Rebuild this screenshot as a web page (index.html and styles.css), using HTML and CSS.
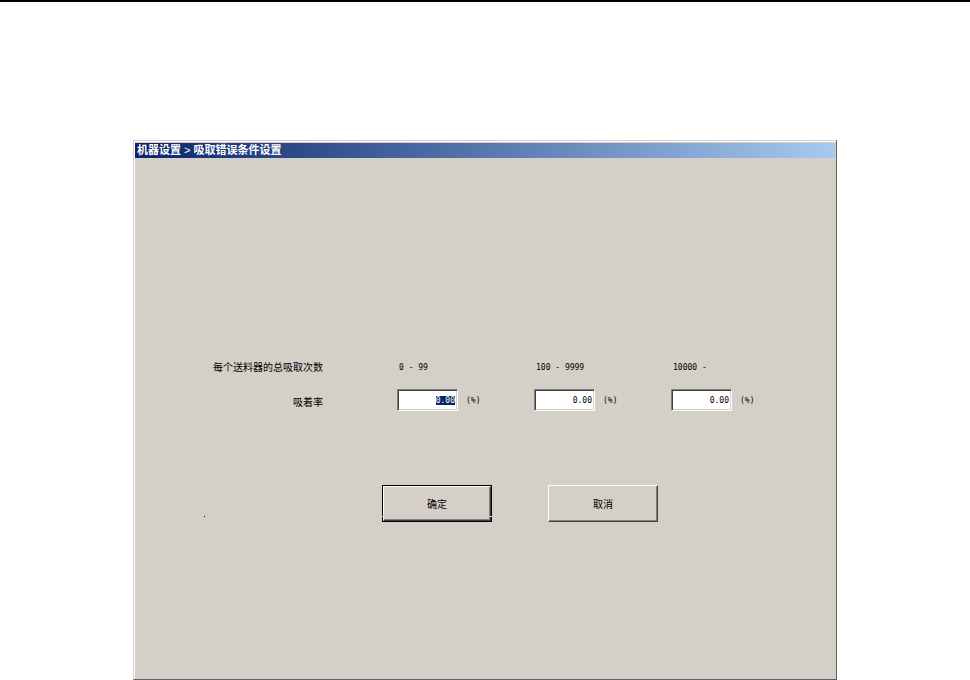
FILE: index.html
```html
<!DOCTYPE html>
<html lang="zh-CN">
<head>
  <meta charset="UTF-8">
  <meta name="viewport" content="width=device-width, initial-scale=1.0">
  <title>机器设置 &gt; 吸取错误条件设置</title>
  <link rel="stylesheet" href="styles.css">
</head>
<body>
  <form class="window">
    <h1 class="title-bar">机器设置 <span class="title-sep">&gt;</span> 吸取错误条件设置</h1>

    <div class="content">
      <div class="fields">
        <span class="row-label">每个送料器的总吸取次数</span>
        <label class="range" for="rate1">0 - 99</label>
        <label class="range" for="rate2">100 - 9999</label>
        <label class="range" for="rate3">10000 -</label>

        <span class="row-label rate-label">吸着率</span>
        <div class="rate">
          <input class="rate-input" id="rate1" type="text" value="0.00">
          <span>(%)</span>
        </div>
        <div class="rate">
          <input class="rate-input" id="rate2" type="text" value="0.00">
          <span>(%)</span>
        </div>
        <div class="rate">
          <input class="rate-input" id="rate3" type="text" value="0.00">
          <span>(%)</span>
        </div>
      </div>

      <div class="actions">
        <button class="btn btn-default" type="submit"><span class="btn-face">确定</span></button>
        <button class="btn" type="button"><span class="btn-face">取消</span></button>
      </div>
    </div>
  </form>

  <script src="form.js"></script>
</body>
</html>
```
FILE: styles.css
```css
* {
  margin: 0;
  padding: 0;
  box-sizing: border-box;
}

body {
  display: flex;
  flex-direction: column;
  min-height: 100vh;
  padding: 138px 133px 0;
  border-top: 2px solid #000;
  background: #fff;
  color: #000;
  font-family: "Liberation Sans", "Noto Sans CJK SC", sans-serif;
  font-size: 10px;
}

.window {
  flex: 1;
  padding: 1px;
  border: 1px solid #d4d0c8;
  border-right-color: #606060;
  border-bottom-color: #606060;
  background: #d4d0c8;
  box-shadow: inset 1px 1px #fff;
}

.title-bar {
  height: 15px;
  margin-top: 1px;
  padding-left: 2px;
  background: linear-gradient(to right, #0a246a, #a6caf0);
  color: #fff;
  font-size: 11px;
  font-weight: bold;
  line-height: 14px;
  white-space: nowrap;
}

.title-sep {
  font-weight: normal;
}

.content {
  padding: 202px 0 32px;
}

.fields {
  display: grid;
  grid-template-columns: 262fr 137fr 137fr 164fr;
  row-gap: 13px;
}

.row-label {
  padding-right: 74px;
  line-height: 16px;
  text-align: right;
  white-space: nowrap;
}

.rate-label {
  padding-top: 6px;
}

.range,
.rate {
  font-family: "DejaVu Sans Mono", monospace;
  font-size: 8px;
}

.range {
  padding-left: 2px;
  line-height: 16px;
}

.rate {
  display: flex;
  align-items: center;
  gap: 8px;
  height: 22px;
}

.rate-input {
  width: 61px;
  height: 22px;
  padding: 0 2px;
  border: 1px solid;
  border-color: #808080 #fff #fff #808080;
  outline: none;
  background: #fff;
  box-shadow: inset 1px 1px #404040, inset -1px -1px #d4d0c8;
  color: #000;
  font: inherit;
  text-align: right;
}

.rate-input::selection {
  background: #0a246a;
  color: #fff;
}

.actions {
  position: relative;
  display: flex;
  justify-content: center;
  gap: 56px;
  margin-top: 74px;
  padding-left: 70px;
}

/* hairline running across to the second button */
.actions::before {
  content: "";
  position: absolute;
  top: 31px;
  left: 69px;
  width: 49%;
  height: 1px;
  border-left: 1px solid #00008b;
  background: #c6d2d0;
}

.btn {
  width: 110px;
  height: 37px;
  border: none;
  background: #d4d0c8;
  color: #000;
  font: inherit;
}

.btn-face {
  display: flex;
  align-items: center;
  justify-content: center;
  height: 100%;
  border: 1px solid;
  border-color: #fff #404040 #404040 #fff;
  box-shadow: inset -1px -1px #808080;
}

.btn-default {
  padding: 1px;
  background: #000;
}

.btn-default .btn-face {
  background: #d4d0c8;
}
```
FILE: form.js
```js
const firstRate = document.getElementById('rate1');
firstRate.focus();
firstRate.select();
```
